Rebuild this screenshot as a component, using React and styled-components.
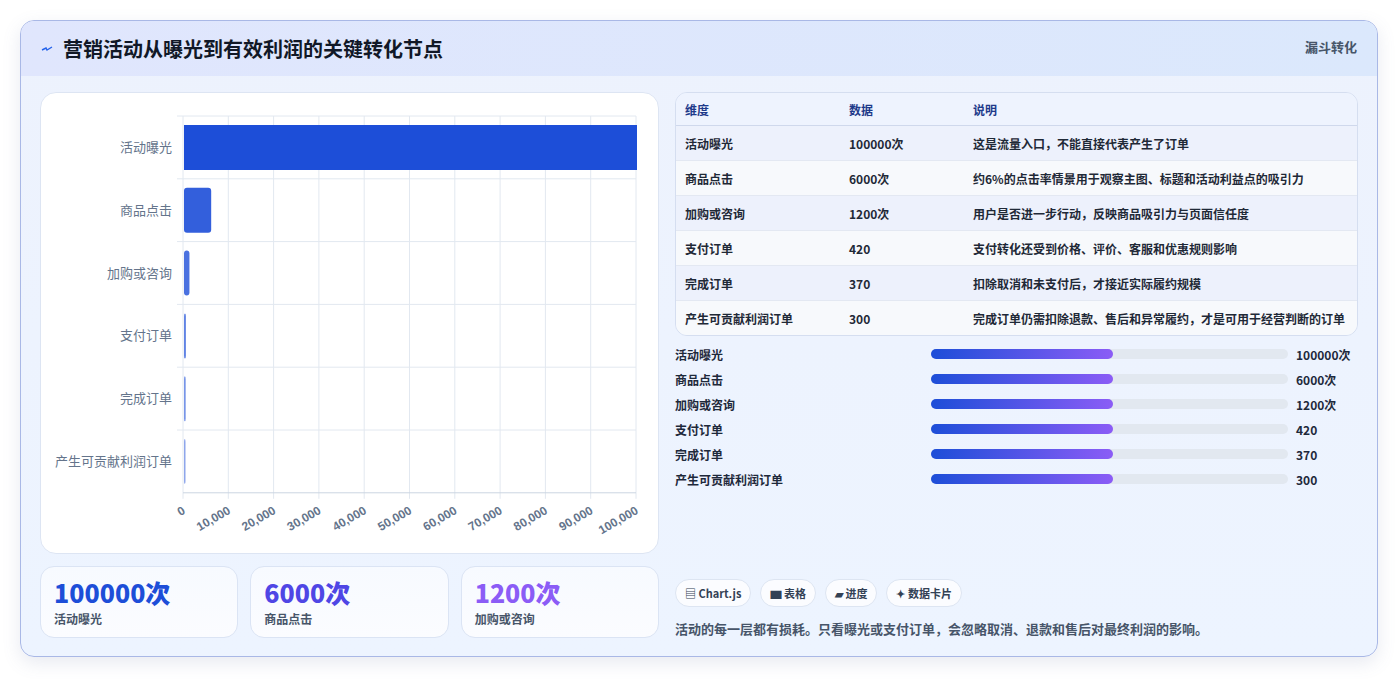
import React from "react";
import styled, { createGlobalStyle } from "styled-components";

const data = [
  { name: "活动曝光", value: 100000, label: "100000次", note: "这是流量入口，不能直接代表产生了订单" },
  { name: "商品点击", value: 6000, label: "6000次", note: "约6%的点击率情景用于观察主图、标题和活动利益点的吸引力" },
  { name: "加购或咨询", value: 1200, label: "1200次", note: "用户是否进一步行动，反映商品吸引力与页面信任度" },
  { name: "支付订单", value: 420, label: "420", note: "支付转化还受到价格、评价、客服和优惠规则影响" },
  { name: "完成订单", value: 370, label: "370", note: "扣除取消和未支付后，才接近实际履约规模" },
  { name: "产生可贡献利润订单", value: 300, label: "300", note: "完成订单仍需扣除退款、售后和异常履约，才是可用于经营判断的订单" },
];

const GlobalStyle = createGlobalStyle`
  body {
    margin: 0;
    background: #fff;
    font-family: "Noto Sans CJK SC", "Noto Sans", sans-serif;
    color: #1e293b;
  }
`;

const Page = styled.div`
  padding: 20px 21px 22px 20px;
`;

const Card = styled.div`
  border: 1px solid #a9b8e6;
  border-radius: 14px;
  background: linear-gradient(180deg, #edf2fd, #edf4ff);
  overflow: hidden;
  box-shadow: 0 6px 18px rgba(100, 116, 160, 0.15);
`;

const Header = styled.div`
  height: 55px;
  display: flex;
  align-items: center;
  justify-content: space-between;
  padding: 0 20px;
  background: linear-gradient(90deg, #e0e6fd, #dbe8fc);
`;

const Title = styled.h1`
  margin: 0;
  font-size: 20px;
  font-weight: 700;
  color: #111827;
  display: flex;
  align-items: center;
  gap: 10px;
`;

const Tag = styled.span`
  font-size: 13px;
  font-weight: 700;
  color: #475569;
  align-self: flex-start;
  margin-top: 16px;
`;

const Body = styled.div`
  display: grid;
  grid-template-columns: 619px 1fr;
  gap: 16px;
  padding: 16px 19px 18px 19px;
`;

const Left = styled.div`
  display: flex;
  flex-direction: column;
  gap: 12px;
`;

const ChartCard = styled.div`
  height: 460px;
  background: #fff;
  border: 1px solid #dde5f3;
  border-radius: 16px;
`;

const Stats = styled.div`
  display: grid;
  grid-template-columns: repeat(3, 1fr);
  gap: 12px;
`;

const Stat = styled.div`
  height: 72px;
  box-sizing: border-box;
  padding: 9px 13px;
  background: linear-gradient(180deg, #f7faff, #fbfcff);
  border: 1px solid #dbe4f4;
  border-radius: 14px;
`;

const StatValue = styled.div`
  font-size: 25px;
  font-weight: 800;
  line-height: 32px;
  color: ${(p) => p.color};
`;

const StatLabel = styled.div`
  font-size: 12px;
  font-weight: 600;
  color: #475569;
  margin-top: 2px;
`;

const Right = styled.div`
  display: flex;
  flex-direction: column;
`;

const Table = styled.table`
  width: 100%;
  border-collapse: separate;
  border-spacing: 0;
  border: 1px solid #d5def0;
  border-radius: 12px;
  overflow: hidden;
  font-size: 12px;
  font-weight: 600;
`;

const Th = styled.th`
  text-align: left;
  height: 32px;
  padding: 0 9px;
  color: #1e3a8a;
  background: #eef3fe;
  border-bottom: 1px solid #cfd8ec;
`;

const Td = styled.td`
  height: 34px;
  padding: 0 9px;
  color: #1f2937;
  background: ${(p) => (p.odd ? "#f7f9fc" : "#edf1fc")};
  border-top: ${(p) => (p.first ? "none" : "1px solid #e3e8f2")};
`;

const Bars = styled.div`
  display: flex;
  flex-direction: column;
  gap: 7px;
  margin-top: 9px;
`;

const BarRow = styled.div`
  display: grid;
  grid-template-columns: 256px 357px 1fr;
  align-items: center;
  font-size: 12px;
  font-weight: 700;
  height: 18px;
  white-space: nowrap;
`;

const Value = styled.span`
  padding-left: 8px;
`;

const Track = styled.div`
  height: 10px;
  border-radius: 5px;
  background: #e2e8f0;
`;

const Fill = styled.div`
  height: 100%;
  border-radius: 5px;
  background: linear-gradient(90deg, #1d4ed8, #8b5cf6);
`;

const Chips = styled.div`
  display: flex;
  gap: 9px;
  margin-top: auto;
`;

const Chip = styled.span`
  height: 26px;
  padding: 0 9px;
  display: inline-flex;
  align-items: center;
  gap: 4px;
  font-size: 11px;
  font-weight: 700;
  color: #334155;
  background: #fbfcff;
  border: 1px solid #dde5f2;
  border-radius: 14px;
`;

const Note = styled.p`
  margin: 12px 0 0;
  font-size: 13px;
  font-weight: 600;
  color: #475569;
`;

function FunnelChart() {
  const x0 = 142, x1 = 595, y0 = 23, rowH = 62.8;
  const ticks = Array.from({ length: 11 }, (_, i) => i * 10000);
  const sx = (v) => x0 + ((x1 - x0) * v) / 100000;
  return (
    <svg width="619" height="460" style={{ display: "block" }}>
      {ticks.map((t) => (
        <line key={t} x1={sx(t)} x2={sx(t)} y1={y0} y2={y0 + rowH * 6 + 6} stroke="#e2e8f0" />
      ))}
      {data.map((d, i) => (
        <line key={"h" + i} x1={x0 - 6} x2={x1} y1={y0 + rowH * i} y2={y0 + rowH * i} stroke="#e2e8f0" />
      ))}
      <line x1={x0} x2={x1} y1={y0 + rowH * 6} y2={y0 + rowH * 6} stroke="#cbd5e1" />
      {data.map((d, i) => (
        <g key={d.name}>
          <rect
            x={x0 + 1}
            y={y0 + rowH * i + 9}
            width={Math.max(sx(d.value) - x0, 1.5)}
            height={45}
            rx={i === 0 ? 0 : 3}
            fill="#1d4ed8"
            opacity={1 - i * 0.1}
          />
          <text x={x0 - 11} y={y0 + rowH * i + 36} textAnchor="end" fontSize="13" fill="#64748b">
            {d.name}
          </text>
        </g>
      ))}
      {ticks.map((t) => (
        <text
          key={"l" + t}
          transform={`translate(${sx(t) + 3},${y0 + rowH * 6 + 20}) rotate(-30)`}
          textAnchor="end"
          fontSize="12"
          fontWeight="700"
          fill="#64748b"
          fontFamily="Liberation Sans, sans-serif"
        >
          {t.toLocaleString("en-US")}
        </text>
      ))}
    </svg>
  );
}

export default function App() {
  return (
    <Page>
      <GlobalStyle />
      <Card>
        <Header>
          <Title>
            <svg width="12" height="10" viewBox="0 0 12 10">
              <path d="M1 6 L5 4 L6 6 L11 3" stroke="#2563eb" strokeWidth="1.4" fill="none" />
            </svg>
            营销活动从曝光到有效利润的关键转化节点
          </Title>
          <Tag>漏斗转化</Tag>
        </Header>
        <Body>
          <Left>
            <ChartCard>
              <FunnelChart />
            </ChartCard>
            <Stats>
              <Stat>
                <StatValue color="#1d4ed8">100000次</StatValue>
                <StatLabel>活动曝光</StatLabel>
              </Stat>
              <Stat>
                <StatValue color="#4f46e5">6000次</StatValue>
                <StatLabel>商品点击</StatLabel>
              </Stat>
              <Stat>
                <StatValue color="#8b5cf6">1200次</StatValue>
                <StatLabel>加购或咨询</StatLabel>
              </Stat>
            </Stats>
          </Left>
          <Right>
            <Table>
              <thead>
                <tr>
                  <Th style={{ width: 146 }}>维度</Th>
                  <Th style={{ width: 106 }}>数据</Th>
                  <Th>说明</Th>
                </tr>
              </thead>
              <tbody>
                {data.map((d, i) => (
                  <tr key={d.name}>
                    <Td odd={i % 2 === 1} first={i === 0}>{d.name}</Td>
                    <Td odd={i % 2 === 1} first={i === 0}>{d.label}</Td>
                    <Td odd={i % 2 === 1} first={i === 0}>{d.note}</Td>
                  </tr>
                ))}
              </tbody>
            </Table>
            <Bars>
              {data.map((d) => (
                <BarRow key={d.name}>
                  <span>{d.name}</span>
                  <Track>
                    <Fill style={{ width: "51%" }} />
                  </Track>
                  <Value>{d.label}</Value>
                </BarRow>
              ))}
            </Bars>
            <Chips>
              <Chip>▤ Chart.js</Chip>
              <Chip>▆ 表格</Chip>
              <Chip>▰ 进度</Chip>
              <Chip>✦ 数据卡片</Chip>
            </Chips>
            <Note>活动的每一层都有损耗。只看曝光或支付订单，会忽略取消、退款和售后对最终利润的影响。</Note>
          </Right>
        </Body>
      </Card>
    </Page>
  );
}
